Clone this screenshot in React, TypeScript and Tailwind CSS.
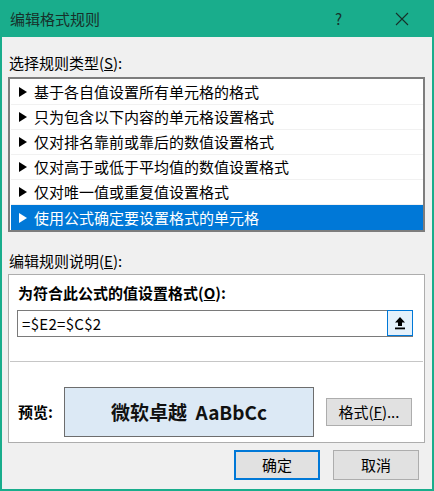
import React from 'react';

const rules = [
  '基于各自值设置所有单元格的格式',
  '只为包含以下内容的单元格设置格式',
  '仅对排名靠前或靠后的数值设置格式',
  '仅对高于或低于平均值的数值设置格式',
  '仅对唯一值或重复值设置格式',
  '使用公式确定要设置格式的单元格',
];

const Arrow = ({ white }: { white?: boolean }) => (
  <svg width="8" height="10" viewBox="0 0 8 10" className="shrink-0">
    <path d="M0 0 L8 5 L0 10 Z" fill={white ? '#ffffff' : '#000000'} />
  </svg>
);

export default function App() {
  const selected = 5;
  return (
    <div className="w-[434px] h-[491px] flex flex-col bg-[#f0f0f0] border-x-2 border-b-2 border-[#19ad8c] font-['Noto_Sans_CJK_SC','Noto_Sans',sans-serif] text-[#000] overflow-hidden">
      {/* title bar */}
      <div className="h-[37px] -mx-[2px] shrink-0 bg-[#19ad8c] flex items-center pl-[10px] text-[#17302a]">
        <span className="text-[15px] leading-[20px] flex-1">编辑格式规则</span>
        <span className="text-[15px] leading-[20px] w-[12px] mr-[48px]">?</span>
        <svg width="14" height="14" viewBox="0 0 14 14" className="mr-[25px]">
          <path d="M1 1 L13 13 M13 1 L1 13" stroke="#17302a" strokeWidth="1.1" />
        </svg>
      </div>

      <div className="flex flex-col pl-[6px] pr-[7px]">
        <div className="mt-[16px] h-[20px] text-[15px] leading-[20px] pl-[1px]">
          选择规则类型(<span className="underline">S</span>):
        </div>

        {/* rule type list */}
        <div className="mt-[4px] h-[155px] bg-white border-2 border-[#7d7d7d] pt-[1px] pl-[1px]">
          {rules.map((r, i) => (
            <div
              key={r}
              className={
                i === selected
                  ? 'h-[25px] flex items-center gap-[7px] pl-[8px] bg-[#0078d7] text-white'
                  : 'h-[25px] flex items-center gap-[7px] pl-[8px] border-b border-[#f1f1f1] text-black'
              }
            >
              <Arrow white={i === selected} />
              <span className="text-[15px] leading-[20px]">{r}</span>
            </div>
          ))}
        </div>

        <div className="mt-[19px] h-[20px] text-[15px] leading-[20px] pl-[1px]">
          编辑规则说明(<span className="underline">E</span>):
        </div>

        {/* description group */}
        <div className="mt-[3px] h-[169px] bg-white border border-[#adadad] flex flex-col">
          <div className="mt-[8px] pl-[9px] h-[20px] text-[15px] leading-[20px] font-bold">
            为符合此公式的值设置格式(<span className="underline">O</span>):
          </div>
          <div className="mt-[7px] ml-[8px] w-[396px] h-[27px] border border-[#7a7a7a] flex items-center">
            <span className="flex-1 pl-[4px] text-[15px] leading-[20px] tracking-[0.3px]">=$E2=$C$2</span>
            <button className="-mr-px -mt-px self-start w-[26px] h-[26px] border border-[#0078d7] bg-[#e5f1fb] flex items-center justify-center">
              <svg width="12" height="14" viewBox="0 0 12 14">
                <path d="M6 1 L11 6.5 L8 6.5 L8 10 L4 10 L4 6.5 L1 6.5 Z" fill="#000" />
                <rect x="1" y="11.5" width="10" height="1.8" fill="#000" />
              </svg>
            </button>
          </div>
          <div className="mt-[24px] mx-[1px] h-px bg-[#c6c6c6]" />
          <div className="mt-[25px] flex items-center pl-[9px]">
            <span className="w-[46px] text-[15px] leading-[20px] font-bold">预览:</span>
            <div className="w-[250px] h-[50px] border border-[#6d6d6d] bg-[#dce9f5] flex items-center justify-center">
              <span className="text-[19px] leading-[24px] font-bold text-[#111]">微软卓越&nbsp;&nbsp;AaBbCc</span>
            </div>
            <button className="ml-[12px] w-[86px] h-[28px] border border-[#adadad] bg-[#e1e1e1] text-[15px] leading-[20px]">
              格式(<span className="underline">F</span>)...
            </button>
          </div>
        </div>

        {/* dialog buttons */}
        <div className="mt-[7px] flex justify-end gap-[13px] mr-[6px]">
          <button className="w-[86px] h-[30px] border-2 border-[#0078d7] bg-[#e1e1e1] text-[15px] leading-[20px]">
            确定
          </button>
          <button className="w-[86px] h-[30px] border border-[#adadad] bg-[#e1e1e1] text-[15px] leading-[20px]">
            取消
          </button>
        </div>
      </div>
    </div>
  );
}
